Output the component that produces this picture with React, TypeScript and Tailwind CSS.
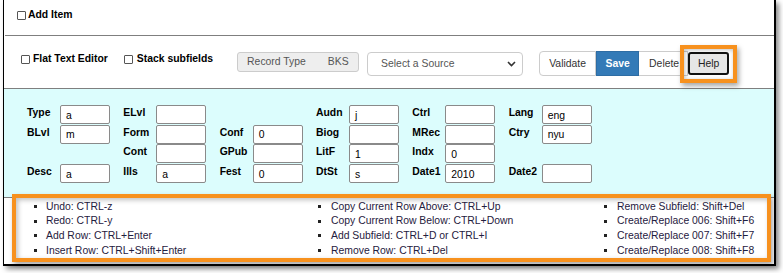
import React from "react";

type Cell = [string, string] | null;

const rows: Cell[][] = [
  [["Type", "a"], ["ELvl", ""], null, ["Audn", "j"], ["Ctrl", ""], ["Lang", "eng"]],
  [["BLvl", "m"], ["Form", ""], ["Conf", "0"], ["Biog", ""], ["MRec", ""], ["Ctry", "nyu"]],
  [null, ["Cont", ""], ["GPub", ""], ["LitF", "1"], ["Indx", "0"], null],
  [["Desc", "a"], ["Ills", "a"], ["Fest", "0"], ["DtSt", "s"], ["Date1", "2010"], ["Date2", ""]],
];

const shortcuts: string[][] = [
  ["Undo: CTRL-z", "Redo: CTRL-y", "Add Row: CTRL+Enter", "Insert Row: CTRL+Shift+Enter"],
  [
    "Copy Current Row Above: CTRL+Up",
    "Copy Current Row Below: CTRL+Down",
    "Add Subfield: CTRL+D or CTRL+I",
    "Remove Row: CTRL+Del",
  ],
  [
    "Remove Subfield: Shift+Del",
    "Create/Replace 006: Shift+F6",
    "Create/Replace 007: Shift+F7",
    "Create/Replace 008: Shift+F8",
  ],
];

function Check() {
  return <span className="inline-block w-[9px] h-[9px] border border-[#555] rounded-[1px] bg-white shrink-0" />;
}

export default function App() {
  return (
    <div className="relative w-[783px] h-[273px] bg-white overflow-hidden font-['Liberation_Sans',Arial,sans-serif] text-[10.4px] text-black">
      <div className="ml-[3px] w-[773px] h-[266px] border-l border-r-2 border-b-2 border-black shadow-[3px_3px_5px_rgba(0,0,0,0.45)] flex flex-col">
        {/* Row 1 */}
        <div className="h-[35px] flex items-start pt-[9px] pl-[13px]">
          <div className="flex items-center gap-[2px] h-[12px]">
            <Check />
            <span className="font-bold">Add Item</span>
          </div>
        </div>
        <div className="h-px bg-[#7f7f7f] ml-px" />
        {/* Row 2 */}
        <div className="h-[52px] flex items-start">
          <div className="flex items-center gap-[3px] ml-[17px] mt-[17px] h-[12px]">
            <Check />
            <span className="font-bold">Flat Text Editor</span>
          </div>
          <div className="flex items-center gap-[4px] ml-[16px] mt-[17px] h-[12px]">
            <Check />
            <span className="font-bold">Stack subfields</span>
          </div>
          <div className="ml-[24px] mt-[16px] w-[122px] h-[20px] bg-[#eee] border border-[#ccc] rounded-[3px] flex items-center text-[#555]">
            <span className="ml-[9px]">Record Type</span>
            <span className="ml-[22px]">BKS</span>
          </div>
          <div className="ml-[8px] mt-[16px] w-[156px] h-[24px] bg-white border border-[#ccc] rounded-[4px] flex items-center justify-between text-[#555]">
            <span className="ml-[13px]">Select a Source</span>
            <svg width="9" height="6" viewBox="0 0 9 6" className="mr-[6px]">
              <path d="M1 1 L4.5 4.5 L8 1" fill="none" stroke="#333" strokeWidth="1.6" />
            </svg>
          </div>
          <div className="ml-[16px] mt-[15px] flex h-[25px]">
            <div className="w-[57px] h-full border border-[#ccc] rounded-l-[4px] bg-white flex items-center justify-center text-[#333]">
              Validate
            </div>
            <div className="w-[43px] h-full border border-[#2e6da4] bg-[#337ab7] flex items-center justify-center text-white font-bold">
              Save
            </div>
            <div className="w-[49px] h-full border border-[#ccc] border-l-0 bg-white flex items-center justify-start pl-[10px] text-[#333]">
              Delete
            </div>
            <div className="w-[41px] h-[23px] mt-px border-2 border-[#111] rounded-[3px] bg-[#e6e6e6] flex items-center justify-center text-[#222]">
              Help
            </div>
          </div>
        </div>
        <div className="h-px bg-[#7f7f7f]" />
        {/* Fixed fields */}
        <div className="h-[108px] bg-[#dcfdfd] pt-[16px] pl-[23px]">
          <div className="grid grid-cols-[repeat(6,96.33px)] grid-rows-[repeat(4,19.7px)]">
            {rows.flat().map((cell, i) =>
              cell ? (
                <div key={i} className="flex items-start">
                  <span className="w-[33px] font-bold leading-[12px] pt-[2px]">{cell[0]}</span>
                  <div className="w-[50px] h-[19px] bg-white border border-[#8a8a8a] rounded-[2px] flex items-center pl-[5px] pt-[2px]">
                    {cell[1]}
                  </div>
                </div>
              ) : (
                <div key={i} />
              )
            )}
          </div>
        </div>
        <div className="h-px bg-[#7f7f7f]" />
        {/* Shortcuts */}
        <div className="flex-1 pl-[30px] pt-[1px] text-[#1f2040]">
          <div className="grid grid-cols-[284px_286px_1fr]">
            {shortcuts.map((col, ci) => (
              <div key={ci} className="flex flex-col">
                {col.map((s) => (
                  <div key={s} className="flex items-center h-[14.7px]">
                    <span className="w-[3px] h-[3px] bg-[#222] shrink-0" />
                    <span className={ci === 0 ? "ml-[9px]" : "ml-[10px]"}>{s}</span>
                  </div>
                ))}
              </div>
            ))}
          </div>
        </div>
      </div>

      {/* Annotation overlays */}
      <div className="absolute left-[680px] top-[45px] w-[57px] h-[38px] border-4 border-[#f7911e] shadow-[2px_3px_5px_rgba(0,0,0,0.35),inset_1px_1px_4px_rgba(0,0,0,0.25)]" />
      <div className="absolute left-[12px] top-[194px] w-[759px] h-[68px] border-4 border-[#f7911e] shadow-[2px_3px_5px_rgba(0,0,0,0.35),inset_2px_2px_5px_rgba(0,0,0,0.25)]" />
    </div>
  );
}
